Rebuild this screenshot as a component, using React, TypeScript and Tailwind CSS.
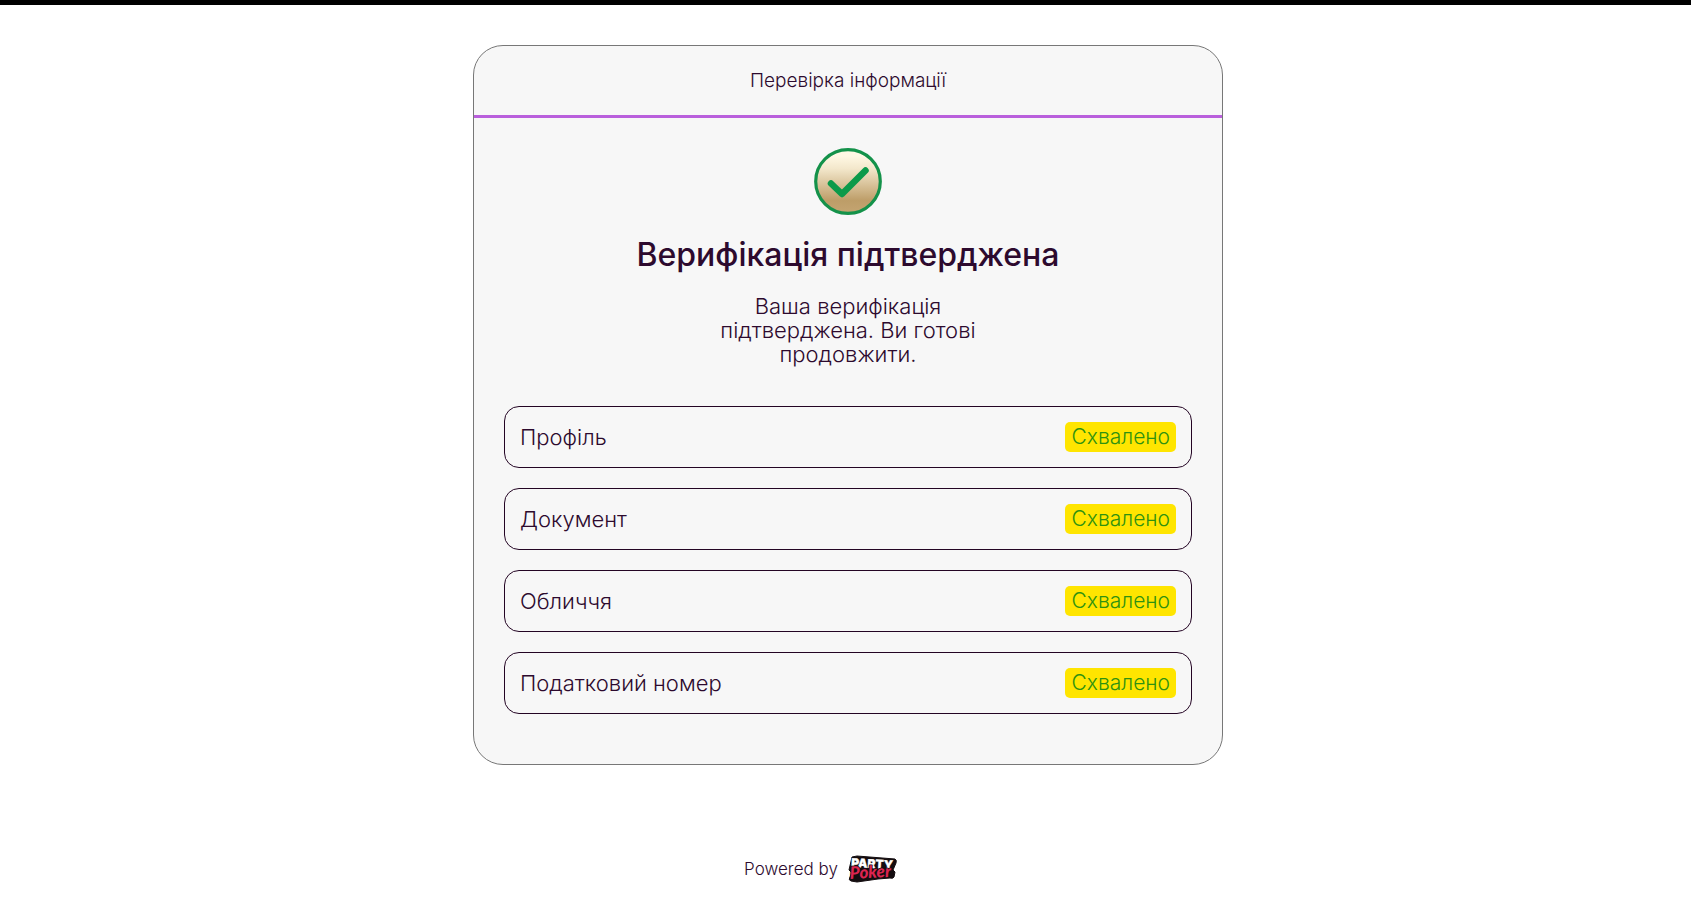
const steps = ["Профіль", "Документ", "Обличчя", "Податковий номер"];

function ApprovedIcon() {
  return (
    <svg className="h-[67px] w-[68px]" viewBox="0 0 68 67" aria-hidden="true">
      <defs>
        <linearGradient id="gold" x1="0" y1="0" x2="0" y2="1">
          <stop offset="0.1" stopColor="#fff8e4" />
          <stop offset="0.3" stopColor="#f3e7cb" />
          <stop offset="0.8" stopColor="#bd9d68" />
          <stop offset="1" stopColor="#c4a572" />
        </linearGradient>
      </defs>
      <ellipse cx="34" cy="33.5" rx="32.3" ry="31.9" fill="url(#gold)" stroke="#14924a" strokeWidth="3.2" />
      <path
        d="M17 35.5 L28 46 L51.5 22.5"
        fill="none"
        stroke="#0c9a4a"
        strokeWidth="6.5"
        strokeLinecap="round"
        strokeLinejoin="round"
      />
    </svg>
  );
}

function PartyPokerLogo() {
  return (
    <svg className="h-[28px] w-[50px]" viewBox="0 0 50 28" role="img" aria-label="Party Poker">
      <path
        d="M4 2 L9 1 L47 4 Q49 5 48 8 L45 15 L47 17 L46 22 Q45 24 42 23 L30 24 L9 27 L3 26 Q0 25 2 22 L4 18 L1 15 Z"
        fill="#140d10"
        stroke="#140d10"
        strokeWidth="1"
        strokeLinejoin="round"
      />
      <text
        x="3"
        y="12"
        transform="rotate(3 3 12)"
        fill="#ffffff"
        stroke="#ffffff"
        strokeWidth="0.3"
        className="font-['Inter'] text-[12px] font-black"
      >
        PARTY
      </text>
      <text
        x="2"
        y="24"
        transform="rotate(-3 2 24)"
        fill="#dc2450"
        stroke="#140d10"
        strokeWidth="1.5"
        paintOrder="stroke"
        strokeLinejoin="round"
        className="font-['Lato'] text-[17px] font-black italic"
      >
        Poker
      </text>
    </svg>
  );
}

export default function App() {
  return (
    <div className="min-h-screen border-t-[5px] border-black bg-white pt-10 pl-[5px] font-['Inter',sans-serif] font-light text-[#2d0a2e]">
      <main className="mx-auto max-w-[750px] overflow-hidden rounded-[30px] border border-[#777777] bg-[#f7f7f7]">
        <header className="flex h-[72px] items-center justify-center border-b-[3px] border-[#b95fdc] text-[19px] leading-[30px]">
          Перевірка інформації
        </header>
        <div className="flex flex-col items-center px-[30px] pt-[30px] pb-[50px]">
          <ApprovedIcon />
          <h1 className="mt-5 text-[32px] leading-10 font-medium">Верифікація підтверджена</h1>
          <p className="mt-[19px] max-w-[264px] text-center text-[22px] leading-6">
            Ваша верифікація підтверджена. Ви готові продовжити.
          </p>
          <ul className="mt-10 flex w-full flex-col gap-5">
            {steps.map((step) => (
              <li
                key={step}
                className="flex items-center justify-between rounded-[15px] border border-[#240524] p-[15px] text-[22px] leading-[30px]"
              >
                <span>{step}</span>
                <span className="rounded-[5px] bg-[#ffe500] px-1.5 text-[21px] text-[#2f9210]">Схвалено</span>
              </li>
            ))}
          </ul>
        </div>
      </main>
      <footer className="mx-auto mt-[90px] flex max-w-[750px] items-center justify-center gap-2.5 pr-[54px] text-[17px] leading-[28px]">
        <span>Powered by</span>
        <PartyPokerLogo />
      </footer>
    </div>
  );
}
